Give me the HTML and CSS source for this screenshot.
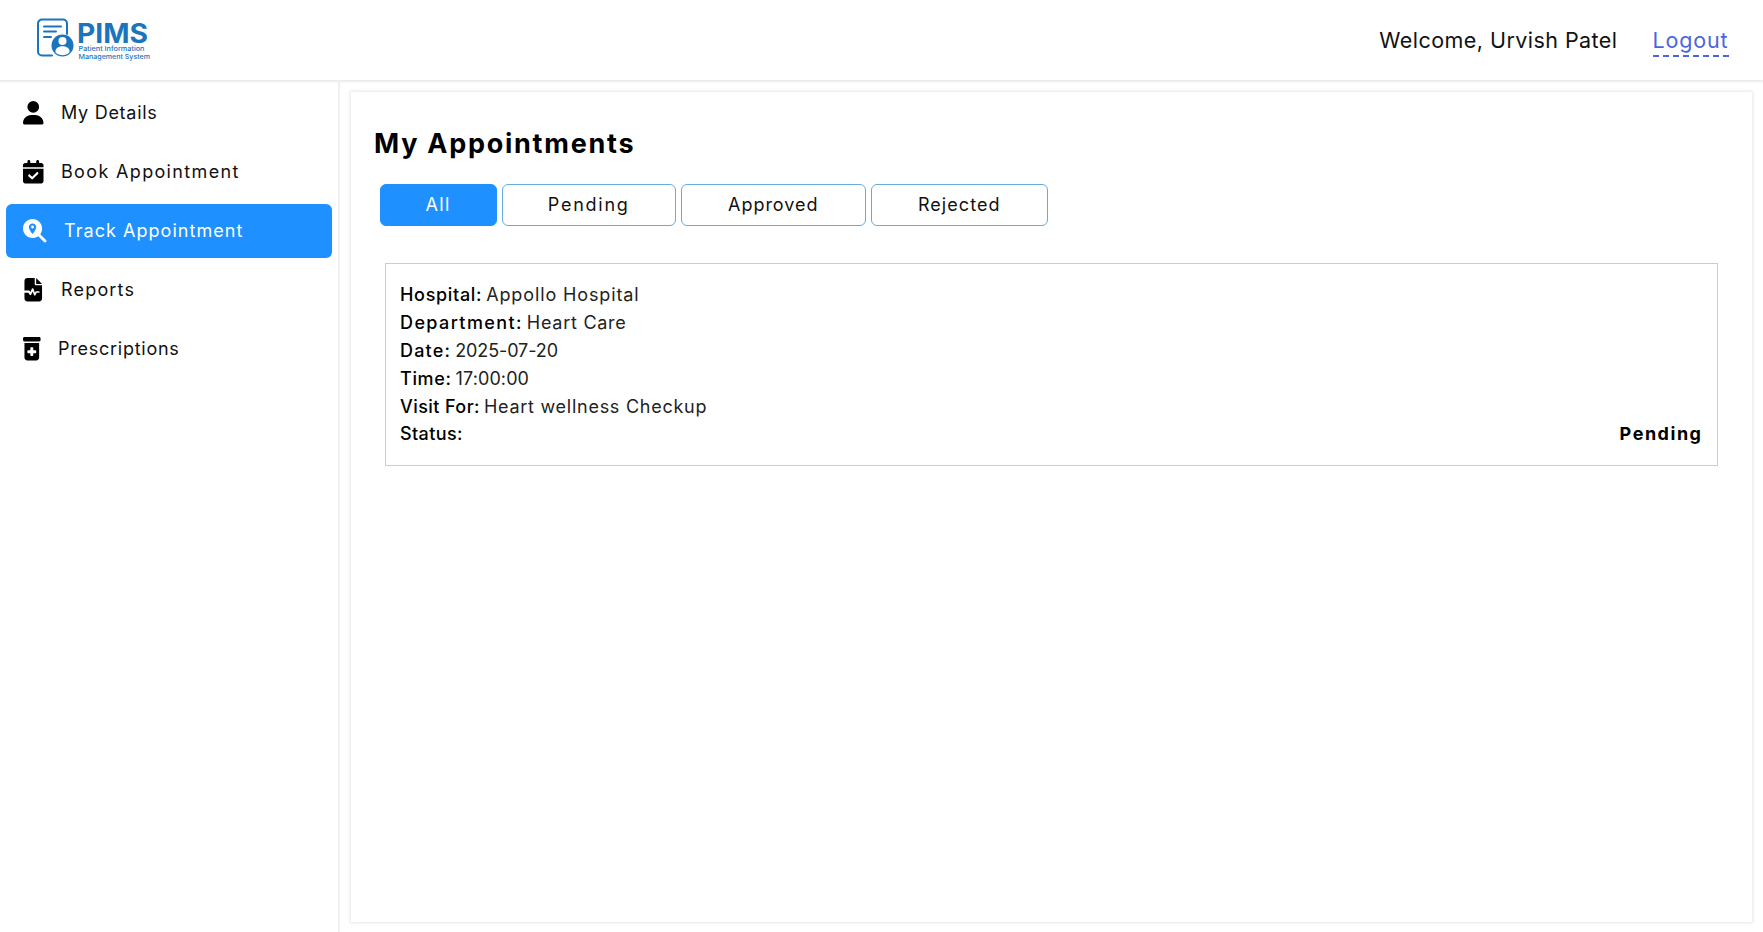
FILE: index.html
```html
<!DOCTYPE html>
<html lang="en">
<head>
<meta charset="utf-8">
<title>PIMS - My Appointments</title>
<link rel="stylesheet" href="styles.css">
</head>
<body>
<header class="header">
  <svg class="logo" viewBox="0 0 116 44" width="116" height="44" role="img" aria-label="PIMS">
    <g fill="none" stroke="#1c75bc" stroke-width="2" stroke-linecap="round" stroke-linejoin="round">
      <path d="M15 39.5H5a4 4 0 0 1-4-4V7.500a4 4 0 0 1 4-4H26a4 4 0 0 1 4 4V18"/>
      <path d="M7 10.500H24M7 15.500H19M7 21H14"/>
    </g>
    <circle cx="25.500" cy="29.500" r="11" fill="#1c75bc"/>
    <circle cx="25.500" cy="25" r="4" fill="#fff"/>
    <path d="M18.500 36.500v-1.500c0-6.500 14-6.500 14 0v1.500c-4 3.500-10 3.500-14 0z" fill="#fff"/>
    <text class="logo-name" x="40" y="26.500" textLength="71" lengthAdjust="spacingAndGlyphs">PIMS</text>
    <text class="logo-sub" x="41.500" y="35.200" textLength="66" lengthAdjust="spacingAndGlyphs">Patient Information</text>
    <text class="logo-sub" x="41.500" y="43" textLength="71.500" lengthAdjust="spacingAndGlyphs">Management System</text>
  </svg>
  <div class="user-area">
    <span class="welcome">Welcome, Urvish Patel</span>
    <a class="logout">Logout</a>
  </div>
</header>
<div class="layout">
  <nav class="sidebar">
    <a class="nav-item nav-details">
      <svg class="icon" viewBox="0 0 448 512"><path d="M224 256A128 128 0 1 0 224 0a128 128 0 1 0 0 256zm-45.700 48C79.800 304 0 383.800 0 482.300C0 498.700 13.300 512 29.700 512H418.300c16.400 0 29.700-13.300 29.700-29.700C448 383.800 368.200 304 269.700 304H178.300z"/></svg>
      <span>My Details</span>
    </a>
    <a class="nav-item nav-book">
      <svg class="icon" viewBox="0 0 448 512"><path d="M128 0c17.700 0 32 14.300 32 32V64H288V32c0-17.700 14.300-32 32-32s32 14.300 32 32V64h48c26.500 0 48 21.500 48 48v48H0V112C0 85.500 21.500 64 48 64H96V32c0-17.700 14.300-32 32-32zM0 192H448V464c0 26.500-21.500 48-48 48H48c-26.500 0-48-21.500-48-48V192zM329 305c9.400-9.400 9.400-24.600 0-33.900s-24.600-9.400-33.900 0l-95 95-47-47c-9.400-9.400-24.600-9.400-33.900 0s-9.400 24.600 0 33.900l64 64c9.400 9.400 24.600 9.400 33.900 0L329 305z"/></svg>
      <span>Book Appointment</span>
    </a>
    <a class="nav-item nav-track active">
      <svg class="icon icon-wide" viewBox="0 0 512 512"><path fill-rule="evenodd" d="M416 208c0 45.900-14.900 88.300-40 122.700L502.600 457.400c12.500 12.500 12.500 32.800 0 45.300s-32.800 12.500-45.300 0L330.700 376c-34.400 25.200-76.800 40-122.700 40C93.100 416 0 322.900 0 208S93.100 0 208 0S416 93.100 416 208zM288 176c0-44.200-35.800-80-80-80s-80 35.800-80 80c0 48.800 46.500 111.600 68.600 138.600c6 7.300 16.800 7.300 22.700 0c22.100-27 68.600-89.800 68.600-138.600zM240 176a32 32 0 1 1-64 0a32 32 0 1 1 64 0z"/></svg>
      <span>Track Appointment</span>
    </a>
    <a class="nav-item nav-reports">
      <svg class="icon" viewBox="-32 0 448 512"><path d="M64 0H224V128c0 17.700 14.300 32 32 32H384V448c0 35.300-28.700 64-64 64H64c-35.300 0-64-28.700-64-64V320H86l28 46c7 12 25 11 31-2l35-70 28 79c5 14 24 15 31 2l27-55h62v-32H256c-6 0-12 3-14 9l-14 27-32-91c-5-14-24-15-31-2l-37 74-15-24c-3-5-8-9-14-9H0V64C0 28.700 28.700 0 64 0zM256 0V128H384L256 0z"/></svg>
      <span>Reports</span>
    </a>
    <a class="nav-item nav-prescriptions">
      <svg class="icon icon-narrow" viewBox="0 0 384 512"><path fill-rule="evenodd" d="M0 32C0 14.300 14.300 0 32 0H352c17.700 0 32 14.300 32 32V64c0 17.700-14.300 32-32 32H32C14.300 96 0 81.700 0 64V32zM32 128H352V448c0 35.300-28.700 64-64 64H96c-35.300 0-64-28.700-64-64V128zM160 240v48H112c-8.800 0-16 7.200-16 16v32c0 8.800 7.200 16 16 16h48v48c0 8.800 7.200 16 16 16h32c8.800 0 16-7.200 16-16V352h48c8.800 0 16-7.200 16-16V304c0-8.800-7.200-16-16-16H224V240c0-8.800-7.200-16-16-16H176c-8.800 0-16 7.200-16 16z"/></svg>
      <span>Prescriptions</span>
    </a>
  </nav>
  <main class="content">
    <h1 class="title">My Appointments</h1>
    <div class="filters">
      <button class="filter filter-all selected">All</button>
      <button class="filter filter-pending">Pending</button>
      <button class="filter filter-approved">Approved</button>
      <button class="filter filter-rejected">Rejected</button>
    </div>
    <section class="appointment">
      <div class="row row-hospital"><strong>Hospital:</strong><span>Appollo Hospital</span></div>
      <div class="row row-department"><strong>Department:</strong><span>Heart Care</span></div>
      <div class="row row-date"><strong>Date:</strong><span>2025-07-20</span></div>
      <div class="row row-time"><strong>Time:</strong><span>17:00:00</span></div>
      <div class="row row-visit"><strong>Visit For:</strong><span>Heart wellness Checkup</span></div>
      <div class="row row-status"><strong>Status:</strong><b class="status">Pending</b></div>
    </section>
  </main>
</div>
</body>
</html>
```
FILE: styles.css
```css
* { box-sizing: border-box; }

body {
  margin: 0;
  height: 100vh;
  display: flex;
  flex-direction: column;
  overflow: hidden;
  background: #fff;
  color: #111;
  font: 400 18px/28px Inter, "Open Sans", sans-serif;
}

.header {
  height: 80px;
  flex: none;
  display: flex;
  align-items: flex-start;
  justify-content: space-between;
  padding: 15.5px 34.5px 0 36.5px;
  box-shadow: 0 1px 2px 1px #ebebeb;
}
.logo { display: block; overflow: visible; }
.logo text { fill: #1c75bc; }
.logo-name { font-size: 26.5px; font-weight: 700; }
.logo-sub { font-size: 6.8px; font-weight: 500; }

.user-area { display: flex; gap: 35px; padding-top: 9px; font-size: 21.5px; line-height: 30px; }
.welcome { letter-spacing: .445px; }
.logout {
  width: 76px;
  height: 32px;
  color: #4b65dc;
  letter-spacing: .85px;
  border-bottom: 2px dashed #4b65dc;
}

.layout { flex: 1; display: flex; min-height: 0; margin-top: 2px; }

.sidebar {
  width: 340px;
  flex: none;
  display: flex;
  flex-direction: column;
  gap: 5px;
  padding: 4px 6px 0 5.5px;
  border-right: 2px solid #f0f0f0;
}
.nav-item {
  height: 54px;
  display: flex;
  align-items: center;
  gap: 17.5px;
  padding-left: 17.5px;
  border-radius: 6px;
}
.icon { width: 20.5px; height: 23.5px; flex: none; fill: #000; }
.icon-wide { width: 23.5px; }
.icon-narrow { width: 17.600px; }
.nav-details { letter-spacing: .72px; }
.nav-book { letter-spacing: 1.34px; }
.nav-track { letter-spacing: 1.05px; }
.nav-reports { letter-spacing: 1.18px; }
.nav-prescriptions { letter-spacing: .74px; }
.active { background: #1e90ff; color: #fff; }
.active .icon { fill: #fff; }

.content {
  flex: 1;
  min-width: 0;
  margin: 10px 11px 10px 11px;
  padding: 34px 34.5px 0 23px;
  box-shadow: 0 0 3px 1px #e6e6e6;
}
.title {
  margin: 0;
  color: #000;
  font-size: 27px;
  line-height: 36px;
  font-weight: 700;
  letter-spacing: 1.74px;
}
.filters { display: flex; gap: 5.500px; margin: 22px 0 0 5.500px; }
.filter {
  height: 42px;
  padding: 0;
  border: 1px solid #64abdf;
  border-radius: 6px;
  background: #fff;
  color: #111;
  font: inherit;
}
.filter-all { width: 117px; letter-spacing: 1.36px; }
.filter-pending { width: 173.500px; letter-spacing: 1.74px; }
.filter-approved { width: 184.500px; letter-spacing: .98px; }
.filter-rejected { width: 176.500px; letter-spacing: 1.05px; }
.selected { background: #1e90ff; border-color: #1e90ff; color: #fff; }

.appointment {
  height: 203px;
  margin: 37px 0 0 11px;
  padding: 17px 14px 0;
  border: 1px solid #ccc;
}
.row { display: flex; gap: 4px; height: 27.900px; line-height: 28px; color: #222; }
.row strong { font-weight: 500; color: #000; }
.row-hospital strong { letter-spacing: .68px; }
.row-hospital span { letter-spacing: .87px; }
.row-department strong { letter-spacing: 1.4px; }
.row-department span { letter-spacing: .73px; }
.row-date strong { letter-spacing: 1.19px; }
.row-date span { letter-spacing: -.1px; }
.row-time strong { letter-spacing: .66px; }
.row-time span { letter-spacing: .09px; }
.row-visit strong { letter-spacing: .42px; }
.row-visit span { letter-spacing: .735px; }
.row-status { justify-content: space-between; }
.row-status strong { letter-spacing: .38px; }
.status { font-weight: 700; color: #000; letter-spacing: 1.52px; }
```
